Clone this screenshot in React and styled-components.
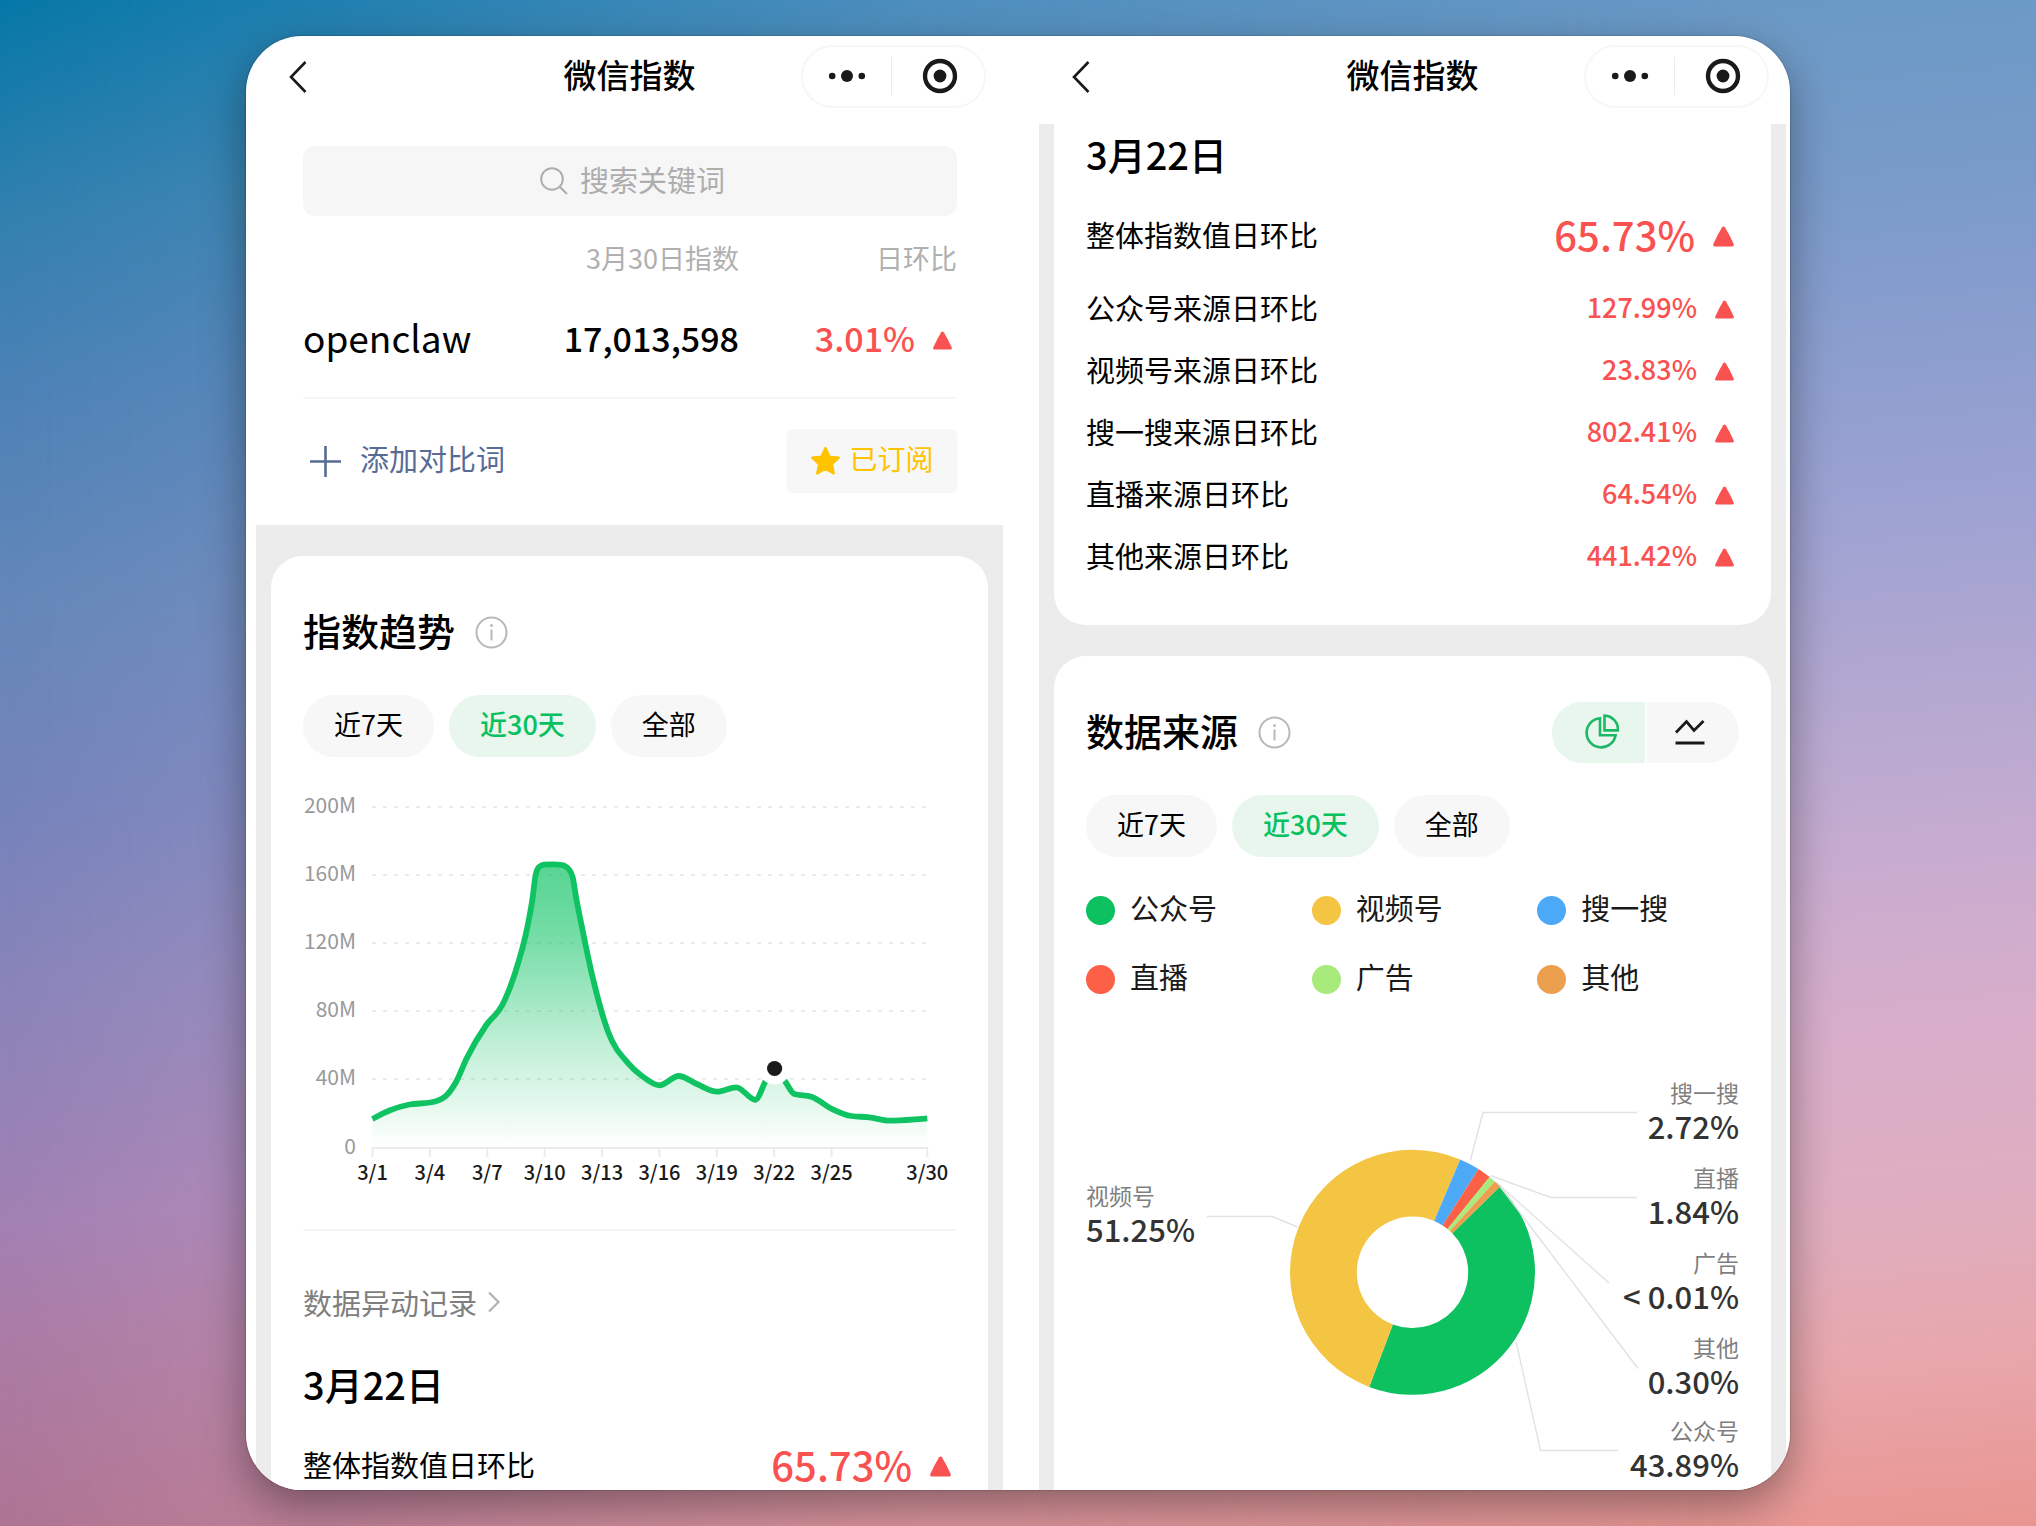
import React, { useState } from 'react';
import styled, { createGlobalStyle } from 'styled-components';

const GlobalStyle = createGlobalStyle`
    * {
        box-sizing: border-box;
    }

    body {
        margin: 0;
        color: #000;
        font-family: 'Noto Sans CJK SC', 'Noto Sans', sans-serif;
    }

    button, input {
        padding: 0;
        border: 0;
        background: none;
        color: inherit;
        font: inherit;
    }

    button {
        cursor: pointer;
    }

    svg {
        display: block;
        flex: none;
    }
`;

const Page = styled.div`
    position: relative;
    display: flex;
    height: 100vh;
    padding: 36px 246px;
    overflow: hidden;
    background: linear-gradient(
        175deg,
        #0578a7 0%,
        #3380af 13%,
        #4c82b6 23%,
        #6587b9 36%,
        #7683bb 48%,
        #8984b9 58%,
        #a280b3 72%,
        #ab7ba4 79%,
        #ae7493 90%,
        #b8788d 100%
    );

    &::before {
        content: '';
        position: absolute;
        inset: 0;
        background: linear-gradient(
            175deg,
            #5a93c5 0%,
            #6b99c5 10%,
            #7a9bca 21%,
            #8f9fcf 32%,
            #a0a3d2 41%,
            #b9a9d0 53%,
            #c9accf 61%,
            #d8aecb 70%,
            #e0adbd 82%,
            #e8a6ab 90%,
            #e99590 100%
        );
        mask-image: linear-gradient(to right, transparent 0%, rgba(0, 0, 0, 0.72) 45%, #000 85%);
    }
`;

const Board = styled.main`
    position: relative;
    flex: 1;
    display: grid;
    grid-template-columns: 1fr 1fr;
    gap: 36px;
    padding: 0 4px 0 10px;
    overflow: hidden;
    border-radius: 56px;
    background: #fff;
`;

const Shadow = styled.div`
    flex: 1;
    display: flex;
    min-width: 0;
    position: relative;
    border-radius: 56px;
    box-shadow: 0 16px 44px rgba(0, 0, 0, 0.38), 0 0 2px rgba(0, 0, 0, 0.4);
`;

const Phone = styled.section`
    display: flex;
    flex-direction: column;
    min-width: 0;
    min-height: 0;
    overflow: hidden;
`;

const Header = styled.header`
    flex: none;
    display: grid;
    grid-template-columns: 1fr auto 1fr;
    align-items: center;
    height: 88px;
    padding: 0 17px 8px;
`;

const HeaderTitle = styled.h1`
    margin: 0;
    padding-bottom: 4px;
    font-size: 33px;
    font-weight: 500;
    line-height: 48px;
`;

const BackButton = styled.button`
    justify-self: start;
    padding: 2px 0 0 16px;
`;

const Capsule = styled.div`
    justify-self: end;
    display: flex;
    align-items: center;
    width: 185px;
    height: 63px;
    border: 2px solid #f7f7f7;
    border-radius: 32px;
`;

const CapsuleButton = styled.button`
    flex: 1;
    display: flex;
    align-items: center;
    justify-content: center;
    height: 38px;

    & + & {
        padding-left: 4px;
        border-left: 1px solid #ececec;
    }
`;

const Top = styled.div`
    flex: none;
    padding: 22px 46px 32px 47px;
`;

const Search = styled.label`
    display: flex;
    align-items: center;
    justify-content: center;
    gap: 12px;
    height: 70px;
    padding-left: 5px;
    border-radius: 12px;
    background: #f6f6f6;
`;

const SearchInput = styled.input`
    width: 145px;
    height: 44px;
    margin-bottom: 4px;
    font-size: 29px;
    outline: none;

    &::placeholder {
        color: #adadad;
        opacity: 1;
    }
`;

const IndexTable = styled.table`
    width: 100%;
    margin-top: 22px;
    border-collapse: collapse;
    table-layout: fixed;

    th, td {
        padding: 0;
        text-align: right;
        white-space: nowrap;
    }

    thead th {
        height: 40px;
        color: #b0b0b0;
        font-size: 27px;
        font-weight: 400;
        line-height: 40px;
    }

    tbody th, tbody td {
        height: 120px;
        border-bottom: 2px solid #f6f6f6;
        font-size: 34px;
        font-weight: 500;
        line-height: 50px;
    }

    tbody th {
        padding-bottom: 2px;
        text-align: left;
        font-size: 37px;
        font-weight: 400;
    }
`;

const Actions = styled.div`
    display: flex;
    align-items: center;
    justify-content: space-between;
    margin-top: 30px;
`;

// Text beside an icon sits slightly above the icon's centre line
const Label = styled.span`
    padding-bottom: 6px;
`;

const AddButton = styled.button`
    display: flex;
    align-items: center;
    gap: 19px;
    padding-left: 7px;
    color: #576b95;
    font-size: 29px;
    line-height: 40px;
`;

const SubscribeButton = styled.button`
    display: flex;
    align-items: center;
    justify-content: center;
    gap: 8px;
    width: 170px;
    height: 64px;
    border-radius: 6px;
    background: #f7f7f7;
    color: #ffc300;
    font-size: 28px;
    line-height: 40px;
`;

const Body = styled.div`
    flex: 1;
    min-height: 0;
    display: flex;
    flex-direction: column;
    gap: 31px;
    padding: ${({ $scrolled }) => ($scrolled ? '0 15px' : '31px 15px 0')};
    overflow: hidden;
    background: #ececec;
`;

const Card = styled.section`
    flex: none;
    padding: ${({ $scrolled }) => ($scrolled ? '5px 32px 38px' : '46px 32px')};
    border-radius: ${({ $scrolled }) => ($scrolled ? '0 0 32px 32px' : '32px')};
    background: #fff;
`;

const CardHead = styled.div`
    display: flex;
    align-items: center;
    justify-content: space-between;
    height: 61px;
`;

const CardTitle = styled.h2`
    display: flex;
    align-items: center;
    gap: 20px;
    margin: 0;
    font-size: 38px;
    font-weight: 500;
    line-height: 54px;
`;

const Pills = styled.div`
    display: flex;
    gap: 15px;
    margin-top: 32px;
`;

const Pill = styled.button`
    height: 62px;
    padding: 0 31px 6px;
    border-radius: 31px;
    background: ${({ $active }) => ($active ? '#e8f6ed' : '#f7f7f7')};
    color: ${({ $active }) => ($active ? '#07c160' : '#000')};
    font-size: 27px;
    font-weight: ${({ $active }) => ($active ? 500 : 400)};
`;

const ChartBox = styled.div`
    margin-top: ${({ $gap }) => $gap}px;

    svg {
        width: 100%;
        height: auto;
        overflow: visible;
    }
`;

const Divider = styled.hr`
    height: 2px;
    margin: 39px 0 0;
    border: 0;
    background: #f5f5f5;
`;

const RecordLink = styled.a`
    display: flex;
    align-items: center;
    gap: 10px;
    margin: 51px 0 37px;
    color: #7f7f7f;
    font-size: 29px;
    line-height: 40px;
    text-decoration: none;
`;

const DateTitle = styled.h3`
    margin: 0 0 26px;
    font-size: 38px;
    font-weight: 500;
    line-height: 50px;
`;

const Ratios = styled.dl`
    margin: 0;
`;

const RatioRow = styled.div`
    display: flex;
    align-items: center;
    justify-content: space-between;
    height: ${({ $main }) => ($main ? 60 : 62)}px;
    font-size: 29px;
    line-height: 40px;

    dt, dd {
        padding-bottom: 3px;
    }

    &:nth-child(2) {
        margin-top: 12px;
    }
`;

const RatioValue = styled.dd`
    margin: 0;
    font-size: ${({ $main }) => ($main ? 40 : 27)}px;
    font-weight: 500;
`;

const Change = styled.span`
    display: inline-flex;
    align-items: center;
    gap: 18px;
    padding-right: 5px;
    color: #fa5151;

    svg {
        margin-top: 5px;
    }
`;

const Switch = styled.div`
    display: flex;
    gap: 2px;
    width: 187px;
    height: 61px;
    overflow: hidden;
    border-radius: 31px;
`;

const SwitchButton = styled.button`
    flex: 1;
    display: flex;
    align-items: center;
    justify-content: center;
    padding: 0 0 2px 6px;
    background: ${({ $active }) => ($active ? '#e8f6ed' : '#f7f7f7')};
    color: ${({ $active }) => ($active ? '#1bb966' : '#1a1a1a')};

    & + & {
        padding: 0 6px 2px 0;
    }
`;

const Legend = styled.ul`
    display: grid;
    grid-template-columns: repeat(3, 1fr);
    gap: 29px 24px;
    margin: 33px 0 0;
    padding: 0;
    list-style: none;
`;

const LegendItem = styled.li`
    display: flex;
    align-items: center;
    gap: 15px;
    height: 40px;
    color: #1a1a1a;
    font-size: 29px;
    line-height: 40px;

    &::before {
        content: '';
        width: 29px;
        height: 29px;
        border-radius: 50%;
        background: ${({ $color }) => $color};
    }
`;

const AxisLabel = styled.text`
    fill: ${({ $dark }) => ($dark ? '#1a1a1a' : '#999')};
    font-size: ${({ $dark }) => ($dark ? 20 : 21)}px;
    font-weight: ${({ $dark }) => ($dark ? 500 : 400)};
    text-anchor: ${({ $dark }) => ($dark ? 'middle' : 'end')};
`;

const SliceName = styled.text`
    fill: #7f7f7f;
    font-size: 23px;
`;

const SliceValue = styled.text`
    fill: #333;
    font-size: 31px;
    font-weight: 500;
`;

const RANGES = ['近7天', '近30天', '全部'];

const RATIOS = [
    { label: '整体指数值日环比', value: '65.73%' },
    { label: '公众号来源日环比', value: '127.99%' },
    { label: '视频号来源日环比', value: '23.83%' },
    { label: '搜一搜来源日环比', value: '802.41%' },
    { label: '直播来源日环比', value: '64.54%' },
    { label: '其他来源日环比', value: '441.42%' },
];

const SOURCES = [
    { name: '公众号', color: '#0dc160' },
    { name: '视频号', color: '#f4c443' },
    { name: '搜一搜', color: '#4ba9f8' },
    { name: '直播', color: '#fc6046' },
    { name: '广告', color: '#a8ea7b' },
    { name: '其他', color: '#eca04f' },
];

// [label, y]
const Y_TICKS = [['200M', 17], ['160M', 85], ['120M', 153], ['80M', 221], ['40M', 289], ['0', 358]];

// [label, day index]
const X_TICKS = [
    ['3/1', 0], ['3/4', 3], ['3/7', 6], ['3/10', 9], ['3/13', 12],
    ['3/16', 15], ['3/19', 18], ['3/22', 21], ['3/25', 24], ['3/30', 29],
];

const TREND = [
    [69.4, 329], [86.4, 320.5], [106.5, 314.5], [127.4, 312.5], [142.2, 306.5], [153.3, 291.5],
    [163.6, 268.5], [183.3, 235], [199.3, 215], [211.4, 185], [225.2, 133], [229.6, 108],
    [232.6, 85], [236, 77], [241, 74.6], [250, 74.3], [259, 75], [265.5, 79], [269.6, 87],
    [273, 107], [278.5, 135], [289.5, 186.7], [305.1, 241.7], [325.2, 273.3], [338.6, 285.7],
    [356.5, 295.3], [375.7, 286], [394.4, 294.3], [414.1, 301.7], [433.3, 297.3], [452.4, 309.8],
    [462.7, 291], [471.6, 278], [481.9, 291], [491.3, 304], [508.3, 306.7], [529.7, 319.3],
    [548.4, 326], [566.3, 327.3], [586.4, 330.7], [624.3, 328.3],
];

const BASELINE = 358;

// Cubic curve that stays monotone between neighbouring points
const monotonePath = (points) => {
    const widths = points.slice(1).map(([x], i) => x - points[i][0]);
    const slopes = points.slice(1).map(([, y], i) => (y - points[i][1]) / widths[i]);
    const tangents = points.map((_, i) => {
        const before = slopes[i - 1];
        const after = slopes[i];
        if (before === undefined) return after;
        if (after === undefined) return before;
        const mean = (before * widths[i] + after * widths[i - 1]) / (widths[i - 1] + widths[i]);
        return (Math.sign(before) + Math.sign(after))
            * Math.min(Math.abs(before), Math.abs(after), Math.abs(mean) / 2);
    });

    return points.slice(1).reduce((path, [x, y], i) => {
        const [px, py] = points[i];
        const step = (x - px) / 3;
        return `${path} C${px + step} ${py + step * tangents[i]} ${x - step} ${y - step * tangents[i + 1]} ${x} ${y}`;
    }, `M${points[0][0]} ${points[0][1]}`);
};

const CENTER = { x: 326.5, y: 212.3 };
const OUTER = 122.5;
const INNER = 55.7;

const polar = (radius, angle) => {
    const rad = ((angle - 90) * Math.PI) / 180;
    return `${CENTER.x + radius * Math.cos(rad)} ${CENTER.y + radius * Math.sin(rad)}`;
};

const slicePath = (from, to) => {
    const large = to - from > 180 ? 1 : 0;
    return `M${polar(OUTER, from)} A${OUTER} ${OUTER} 0 ${large} 1 ${polar(OUTER, to)}`
        + ` L${polar(INNER, to)} A${INNER} ${INNER} 0 ${large} 0 ${polar(INNER, from)} Z`;
};

const SLICES = [
    { name: '公众号', value: '43.89%', from: 45.6, to: 200.7, color: '#0dc160', y: 380, line: '430,281.5 454.5,390.5 532,390.5' },
    { name: '视频号', value: '51.25%', from: 200.7, to: 382.9, color: '#f4c443', y: 145, left: true, line: '121,156.5 186.5,156.5 211.5,167' },
    { name: '搜一搜', value: '2.72%', from: 22.9, to: 32.6, color: '#4ba9f8', y: 42, line: '384.5,100 397,52.5 551,52.5' },
    { name: '直播', value: '1.84%', from: 32.6, to: 39, color: '#fc6046', y: 127, line: '404.5,115.5 465,137.5 551,137.5' },
    { name: '广告', value: '< 0.01%', from: 39, to: 42.2, color: '#a8ea7b', y: 212, line: '410.5,122.5 523,223' },
    { name: '其他', value: '0.30%', from: 42.2, to: 45.6, color: '#eca04f', y: 297, line: '413,125 552,308.5' },
];

const UpArrow = ({ size = 19 }) => (
    <svg width={size} height={size} viewBox="0 0 20 20" fill="#fa5151" aria-hidden="true">
        <path d="M8.7 1.2Q10 -0.4 11.3 1.2Q15.6 8 19.6 17Q20.4 19.6 18 19.6H2Q-0.4 19.6 0.4 17Q4.4 8 8.7 1.2Z"/>
    </svg>
);

const InfoIcon = () => (
    <svg width="33" height="33" viewBox="0 0 33 33" fill="none" stroke="#b8b8b8" strokeWidth="2" aria-hidden="true">
        <circle cx="16.5" cy="16.5" r="15"/>
        <path d="M16.5 13.5V24.5"/>
        <circle cx="16.5" cy="9.5" r="1.5" fill="#b8b8b8" stroke="none"/>
    </svg>
);

const PhoneHeader = () => (
    <Header>
        <BackButton aria-label="返回">
            <svg width="18" height="32" viewBox="0 0 18 32" fill="none" stroke="#1a1a1a" strokeWidth="2.6">
                <path d="M16.5 1L2 16L16.5 31"/>
            </svg>
        </BackButton>
        <HeaderTitle>微信指数</HeaderTitle>
        <Capsule>
            <CapsuleButton aria-label="更多">
                <svg width="38" height="14" viewBox="0 0 38 14" fill="#1a1a1a">
                    <circle cx="4.2" cy="7" r="3.3"/>
                    <circle cx="19" cy="7" r="6"/>
                    <circle cx="33.8" cy="7" r="3.3"/>
                </svg>
            </CapsuleButton>
            <CapsuleButton aria-label="关闭">
                <svg width="36" height="36" viewBox="0 0 36 36" fill="none">
                    <circle cx="18" cy="18" r="15" stroke="#1a1a1a" strokeWidth="4.4"/>
                    <circle cx="18" cy="18" r="6.4" fill="#1a1a1a"/>
                </svg>
            </CapsuleButton>
        </Capsule>
    </Header>
);

const RangePills = () => {
    const [range, setRange] = useState('近30天');

    return (
        <Pills>
            {RANGES.map(item => (
                <Pill
                    key={item}
                    $active={item === range}
                    aria-pressed={item === range}
                    onClick={() => setRange(item)}>
                    {item}
                </Pill>
            ))}
        </Pills>
    );
};

const DayRatios = ({ items }) => (
    <>
        <DateTitle>3月22日</DateTitle>
        <Ratios>
            {items.map(({ label, value }, i) => (
                <RatioRow key={label} $main={i === 0}>
                    <dt>{label}</dt>
                    <RatioValue $main={i === 0}>
                        <Change>
                            {value}
                            <UpArrow size={i === 0 ? 21 : 19}/>
                        </Change>
                    </RatioValue>
                </RatioRow>
            ))}
        </Ratios>
    </>
);

const TrendChart = () => {
    const line = monotonePath(TREND);
    const dayX = day => 69.5 + day * 19.13;

    return (
        <svg viewBox="0 0 653 400" role="img" aria-label="指数趋势">
            <defs>
                <linearGradient id="trendFill" x1="0" y1="74" x2="0" y2="358" gradientUnits="userSpaceOnUse">
                    <stop offset="0" stopColor="#07c160" stopOpacity="0.68"/>
                    <stop offset="0.25" stopColor="#07c160" stopOpacity="0.56"/>
                    <stop offset="0.6" stopColor="#07c160" stopOpacity="0.28"/>
                    <stop offset="1" stopColor="#07c160" stopOpacity="0"/>
                </linearGradient>
            </defs>
            {Y_TICKS.map(([label, y]) => (
                <g key={label}>
                    <AxisLabel x="53" y={y + 6}>{label}</AxisLabel>
                    {y !== BASELINE && (
                        <path d={`M69 ${y}H625`} stroke="#ebebeb" strokeWidth="2" strokeDasharray="4 7"/>
                    )}
                </g>
            ))}
            <path d={`M69 ${BASELINE}H625`} stroke="#ebebeb" strokeWidth="2"/>
            {X_TICKS.map(([label, day]) => (
                <g key={label}>
                    <path d={`M${dayX(day)} ${BASELINE}v9`} stroke="#ebebeb" strokeWidth="2"/>
                    <AxisLabel $dark x={dayX(day)} y="390">{label}</AxisLabel>
                </g>
            ))}
            <path d={`${line} V${BASELINE} H69.4 Z`} fill="url(#trendFill)"/>
            <path d={line} fill="none" stroke="#0fc262" strokeWidth="5.8" strokeLinejoin="round"/>
            <circle cx="471.6" cy="278.5" r="16" fill="#fff"/>
            <circle cx="471.6" cy="278.5" r="7.6" fill="#1a1a1a"/>
        </svg>
    );
};

const SourceChart = () => (
    <svg viewBox="0 0 653 440" role="img" aria-label="数据来源">
        {SLICES.map(({ name, value, from, to, color, y, left, line }) => (
            <g key={name} textAnchor={left ? 'start' : 'end'}>
                <polyline points={line} fill="none" stroke="#e2e2e2" strokeWidth="1.4"/>
                <path d={slicePath(from, to)} fill={color}/>
                <SliceName x={left ? 0 : 653} y={y}>{name}</SliceName>
                <SliceValue x={left ? 0 : 653} y={y + 37}>{value}</SliceValue>
            </g>
        ))}
    </svg>
);

const TrendPhone = () => (
    <Phone>
        <PhoneHeader/>
        <Top>
            <Search>
                <svg width="28" height="28" viewBox="0 0 28 28" fill="none" stroke="#adadad" strokeWidth="2" aria-hidden="true">
                    <circle cx="12" cy="12" r="10.8"/>
                    <path d="M19.8 19.8L27 27"/>
                </svg>
                <SearchInput type="text" placeholder="搜索关键词" aria-label="搜索关键词"/>
            </Search>
            <IndexTable>
                <thead>
                    <tr>
                        <th aria-label="关键词"/>
                        <th>3月30日指数</th>
                        <th>日环比</th>
                    </tr>
                </thead>
                <tbody>
                    <tr>
                        <th scope="row">openclaw</th>
                        <td>17,013,598</td>
                        <td>
                            <Change>
                                3.01%
                                <UpArrow/>
                            </Change>
                        </td>
                    </tr>
                </tbody>
            </IndexTable>
            <Actions>
                <AddButton>
                    <svg width="31" height="31" viewBox="0 0 31 31" stroke="#576b95" strokeWidth="2.6" aria-hidden="true">
                        <path d="M15.5 0V31M0 15.5H31"/>
                    </svg>
                    <Label>添加对比词</Label>
                </AddButton>
                <SubscribeButton>
                    <svg width="31" height="30" viewBox="0 0 31 30" fill="#ffc300" aria-hidden="true">
                        <path
                            d="M15.5 2L19.4 10.6L28.8 11.7L21.9 18.1L23.7 27.4L15.5 22.8L7.3 27.4L9.1 18.1L2.2 11.7L11.6 10.6Z"
                            stroke="#ffc300"
                            strokeWidth="2.4"
                            strokeLinejoin="round"/>
                    </svg>
                    <Label>已订阅</Label>
                </SubscribeButton>
            </Actions>
        </Top>
        <Body>
            <Card>
                <CardHead>
                    <CardTitle>
                        <Label>指数趋势</Label>
                        <InfoIcon/>
                    </CardTitle>
                </CardHead>
                <RangePills/>
                <ChartBox $gap={33}>
                    <TrendChart/>
                </ChartBox>
                <Divider/>
                <RecordLink href="#records">
                    数据异动记录
                    <svg width="14" height="22" viewBox="0 0 14 22" fill="none" stroke="#b2b2b2" strokeWidth="2.2" aria-hidden="true">
                        <path d="M2 1.5L11.5 11L2 20.5"/>
                    </svg>
                </RecordLink>
                <DayRatios items={RATIOS.slice(0, 1)}/>
            </Card>
        </Body>
    </Phone>
);

const SourcePhone = () => {
    const [view, setView] = useState('pie');

    return (
        <Phone>
            <PhoneHeader/>
            <Body $scrolled>
                <Card $scrolled>
                    <DayRatios items={RATIOS}/>
                </Card>
                <Card>
                    <CardHead>
                        <CardTitle>
                            <Label>数据来源</Label>
                            <InfoIcon/>
                        </CardTitle>
                        <Switch>
                            <SwitchButton
                                $active={view === 'pie'}
                                aria-label="饼图"
                                onClick={() => setView('pie')}>
                                <svg width="36" height="36" viewBox="0 0 36 36" fill="none" stroke="currentColor" strokeWidth="2.6">
                                    <path d="M17 4.2A14.6 14.6 0 1 0 32.6 21.2H17Z"/>
                                    <path d="M21.5 1.6V16.4H35A14 14 0 0 0 21.5 1.6Z"/>
                                </svg>
                            </SwitchButton>
                            <SwitchButton
                                $active={view === 'line'}
                                aria-label="折线图"
                                onClick={() => setView('line')}>
                                <svg width="32" height="26" viewBox="0 0 32 26" fill="none" stroke="currentColor" strokeWidth="2.8">
                                    <path d="M2 13.5L12.5 2.5L20 11.5L29.5 2"/>
                                    <path d="M1.5 24H30.5"/>
                                </svg>
                            </SwitchButton>
                        </Switch>
                    </CardHead>
                    <RangePills/>
                    <Legend>
                        {SOURCES.map(({ name, color }) => (
                            <LegendItem key={name} $color={color}>
                                <Label>{name}</Label>
                            </LegendItem>
                        ))}
                    </Legend>
                    <ChartBox $gap={61}>
                        <SourceChart/>
                    </ChartBox>
                </Card>
            </Body>
        </Phone>
    );
};

const App = () => (
    <>
        <GlobalStyle/>
        <Page>
            <Shadow>
                <Board>
                    <TrendPhone/>
                    <SourcePhone/>
                </Board>
            </Shadow>
        </Page>
    </>
);

export default App;
